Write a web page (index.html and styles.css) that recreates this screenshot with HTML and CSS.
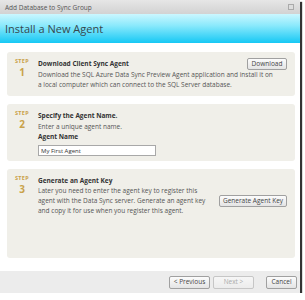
FILE: index.html
```html
<!DOCTYPE html>
<html lang="en">
<head>
    <meta charset="UTF-8">
    <title>Add Database to Sync Group</title>
    <link rel="stylesheet" href="styles.css">
</head>
<body>
    <div class="dialog">
        <div class="titlebar">
            <span>Add Database to Sync Group</span>
            <span class="close"></span>
        </div>
        <div class="header">Install a New Agent</div>
        <div class="content">
            <div class="step step-1">
                <div class="step-num"><span>STEP</span><b>1</b></div>
                <div class="step-body">
                    <div class="step-head">
                        <h3>Download Client Sync Agent</h3>
                        <button type="button" class="btn">Download</button>
                    </div>
                    <p>Download the SQL Azure Data Sync Preview Agent application and install it on a local computer which can connect to the SQL Server database.</p>
                </div>
            </div>
            <div class="step step-2">
                <div class="step-num"><span>STEP</span><b>2</b></div>
                <div class="step-body">
                    <h3>Specify the Agent Name.</h3>
                    <p class="hint">Enter a unique agent name.</p>
                    <label for="agentName">Agent Name</label>
                    <input type="text" id="agentName" value="My First Agent">
                </div>
            </div>
            <div class="step step-3">
                <div class="step-num"><span>STEP</span><b>3</b></div>
                <div class="step-body">
                    <h3>Generate an Agent Key</h3>
                    <div class="key-row">
                        <p>Later you need to enter the agent key to register this agent with the Data Sync server. Generate an agent key and copy it for use when you register this agent.</p>
                        <button type="button" class="btn">Generate Agent Key</button>
                    </div>
                </div>
            </div>
        </div>
        <div class="footer">
            <button type="button" class="btn">&lt; Previous</button>
            <button type="button" class="btn" disabled>Next &gt;</button>
            <button type="button" class="btn cancel">Cancel</button>
        </div>
    </div>
</body>
</html>
```

FILE: styles.css
```css
body {
    margin: 0;
    background: #fff;
    font-family: 'Open Sans', 'DejaVu Sans', sans-serif;
    color: #444;
}

.dialog {
    width: 300px;
    height: 293px;
    display: flex;
    flex-direction: column;
    background: #fff;
    box-shadow: 2px 2px 1px #333;
}

.titlebar {
    height: 14px;
    padding: 0 6px 0 5px;
    display: flex;
    align-items: center;
    justify-content: space-between;
    font-size: 6.5px;
    color: #555;
    background: linear-gradient(#e6e6e6, #d2d2d2);
}

.close {
    width: 4px;
    height: 4px;
    border: 1px solid #aaa;
    background: #ddd;
}

.header {
    height: 29px;
    padding-left: 5px;
    display: flex;
    align-items: center;
    font-size: 11px;
    color: #37474d;
    background: linear-gradient(#cbf7ff, #8ae9fc 40%, #16c8f4);
}

.content {
    flex: 1;
    padding: 9px 5px 0 7px;
    display: flex;
    flex-direction: column;
    gap: 8px;
}

.step {
    display: flex;
    background: #f0efe9;
    border-radius: 3px;
    padding: 5px 8px 0 5px;
    box-sizing: border-box;
}

.step-1 { height: 44px; }
.step-2 { height: 57px; }
.step-3 { height: 89px; }

.step-num {
    width: 26px;
    display: flex;
    flex-direction: column;
    align-items: center;
    gap: 2px;
    padding: 1px 6px 0 0;
    box-sizing: border-box;
    color: #c9a24a;
}

.step-num span {
    font-size: 5.5px;
    line-height: 7px;
    font-weight: bold;
    letter-spacing: 0.3px;
}

.step-num b {
    font-size: 10px;
    line-height: 10px;
}

.step-body {
    flex: 1;
    font-size: 6.5px;
}

.step-head {
    display: flex;
    justify-content: space-between;
    align-items: center;
}

h3 {
    margin: 2px 0 0;
    font-size: 6.5px;
    font-weight: bold;
    color: #333;
}

.step-head h3 {
    margin-top: 0;
}

p {
    margin: 3px 0 0;
    line-height: 10px;
    color: #555;
}

.step-head + p {
    margin-top: 0;
    width: 236px;
}

.hint {
    margin-top: 2px;
}

label {
    display: block;
    font-weight: bold;
    color: #333;
}

input {
    margin-top: 4px;
    width: 118px;
    height: 11px;
    box-sizing: border-box;
    border: 1px solid #a8a8a8;
    padding: 0 2px;
    font-family: inherit;
    font-size: 6px;
    color: #333;
}

.key-row {
    display: flex;
    justify-content: space-between;
    align-items: center;
}

.key-row p {
    width: 172px;
    margin-top: 1px;
}

.btn {
    height: 12px;
    padding: 0;
    white-space: nowrap;
    font-family: inherit;
    font-size: 6.5px;
    line-height: 10px;
    color: #444;
    background: linear-gradient(#fcfcfc, #e4e4e4);
    border: 1px solid #a0a0a0;
    border-radius: 2px;
}

.step-head .btn {
    width: 40px;
    margin-top: 1px;
}

.key-row .btn {
    width: 68px;
}

.footer {
    height: 22px;
    display: flex;
    justify-content: flex-end;
    align-items: center;
    gap: 3px;
    padding-right: 3px;
    background: #ececec;
    margin-top: 13px;
}

.footer .btn {
    width: 41px;
    height: 13px;
}

.footer .btn:disabled {
    color: #aaa;
    border-color: #c6c6c6;
    background: linear-gradient(#f6f6f6, #ececec);
}

.footer .cancel {
    width: 31px;
    margin-left: 9px;
}
```
